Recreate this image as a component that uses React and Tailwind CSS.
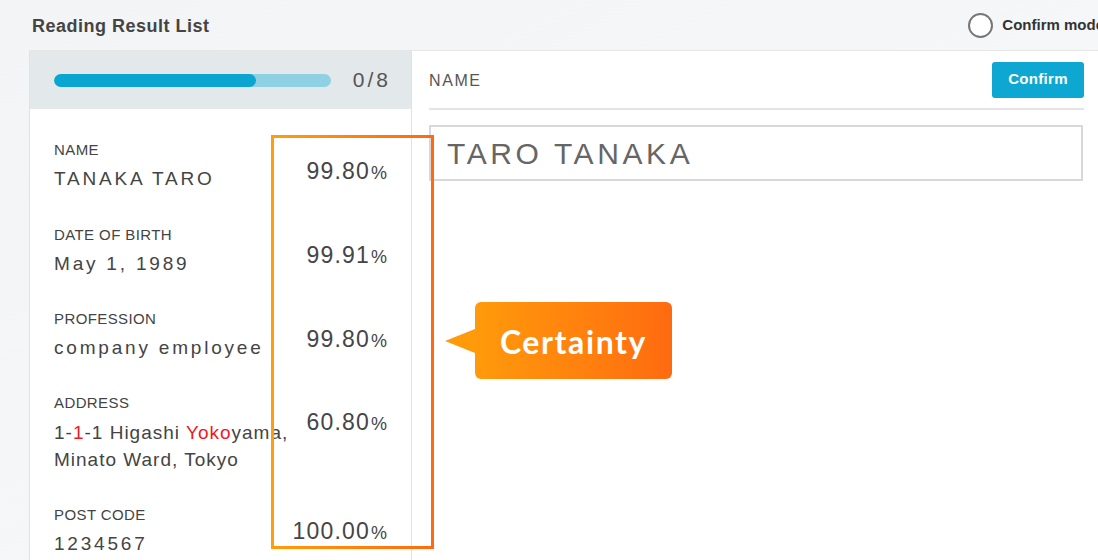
import React from 'react';

// Reading result rows shown in the left list
const FIELDS = [
  { label: 'NAME', value: 'TANAKA TARO', num: '99.80', gap: 'mt-[15px]' },
  { label: 'DATE OF BIRTH', value: 'May 1, 1989', num: '99.91', gap: 'mt-[14px]' },
  { label: 'PROFESSION', value: 'company employee', num: '99.80', gap: 'mt-[14px]' },
  { label: 'ADDRESS', address: true, num: '60.80', gap: 'mt-[13px]' },
  { label: 'POST CODE', value: '1234567', num: '100.00', gap: 'mt-[10px]' },
];

const rowSpacing = ['mt-0', 'mt-[36px]', 'mt-[35px]', 'mt-[35px]', 'mt-[34px]'];

const Percent = ({ num, gap }) => (
  <div className={`${gap} shrink-0 leading-[28px] text-[#454545] whitespace-nowrap`}>
    <span className="text-[23px] tracking-[1.2px]">{num}</span>
    <span className="text-[18px] ml-[1px]">%</span>
  </div>
);

const FieldRow = ({ field, idx }) => (
  <div className={`${rowSpacing[idx]} flex justify-between`}>
    <div className="min-w-0">
      <div className="text-[15px] leading-[16px] text-[#444] tracking-[0.4px]">{field.label}</div>
      {field.address ? (
        <div className="mt-[8px] text-[19px] leading-[27px] text-[#444] tracking-[1px] whitespace-nowrap">
          <div>
            1-<span className="text-[#f0191e]">1</span>-1 Higashi{' '}
            <span className="text-[#f0191e]">Yoko</span>yama,
          </div>
          <div>Minato Ward, Tokyo</div>
        </div>
      ) : (
        <div className="mt-[9px] text-[19px] leading-[24px] text-[#444] tracking-[2.8px] whitespace-nowrap">
          {field.value}
        </div>
      )}
    </div>
    <Percent num={field.num} gap={field.gap} />
  </div>
);

const ProgressHeader = () => (
  <div className="h-[58px] bg-[#e3e8eb] flex items-center pl-[24px] pr-[23px]">
    <div className="w-[277px] h-[13px] rounded-full bg-[#8fd0e2] overflow-hidden">
      <div className="h-full w-[202px] rounded-full bg-[#0ba5d2]" />
    </div>
    <div className="ml-auto text-[21px] tracking-[3px] text-[#555] mr-[-3px]">0/8</div>
  </div>
);

export default function App() {
  return (
    <div
      className="relative w-[1098px] h-[560px] overflow-hidden bg-gradient-to-br from-[#f3f4f6] to-[#f8f9fb]"
      style={{ fontFamily: '"Liberation Sans", Arial, sans-serif' }}
    >
      {/* top bar */}
      <div className="h-[50px] flex items-center pl-[32px]">
        <div className="text-[18px] font-bold text-[#444] tracking-[0.5px] mt-[2px]">Reading Result List</div>
        <div className="ml-auto shrink-0 flex items-center gap-[9px] mr-[-6px]">
          <div className="w-[25px] h-[25px] rounded-full border-2 border-[#777] bg-white" />
          <div className="text-[15px] font-bold text-[#333] whitespace-nowrap">Confirm mode</div>
        </div>
      </div>

      {/* main area */}
      <div className="flex ml-[29px] h-[510px] border-t border-[#e6e6e6] bg-white">
        {/* left list */}
        <div className="w-[383px] shrink-0 border-l border-r border-[#e2e2e2]">
          <ProgressHeader />
          <div className="pt-[33px] pl-[24px] pr-[24px]">
            {FIELDS.map((f, i) => (
              <FieldRow key={f.label} field={f} idx={i} />
            ))}
          </div>
        </div>

        {/* right detail */}
        <div className="flex-1 pl-[17px] pr-[14px]">
          <div className="h-[59px] flex items-center border-b-2 border-[#e4e4e4]">
            <div className="text-[16px] tracking-[1.6px] text-[#555] mt-[2px]">NAME</div>
            <button className="ml-auto w-[92px] h-[36px] rounded-[3px] bg-[#0ea7d2] text-white font-bold text-[15px] tracking-[0.3px]">
              Confirm
            </button>
          </div>
          <div className="mt-[15px] h-[56px] mr-[1px] border-2 border-[#d8d8d8] flex items-center pl-[16px]">
            <span className="text-[30px] tracking-[3.6px] text-[#666]">TARO TANAKA</span>
          </div>
        </div>
      </div>

      {/* certainty highlight */}
      <div className="absolute left-[271px] top-[135px] w-[163px] h-[414px] border-[3px] border-solid [border-image:linear-gradient(90deg,#ff9d0a,#ff6a10)_1]" />

      {/* callout */}
      <div className="absolute left-[445px] top-[302px] flex items-center">
        <svg width="30" height="24" viewBox="0 0 30 24" className="block">
          <polygon points="0,12 30,0 30,24" fill="#ff9a0b" />
        </svg>
        <div className="w-[197px] h-[77px] rounded-[6px] bg-gradient-to-r from-[#ff9a0b] to-[#ff6a10] flex items-center justify-center">
          <span
            className="text-[32px] font-bold text-white tracking-[1.6px] mt-[2px]"
            style={{ fontFamily: 'Lato, "Noto Sans", sans-serif' }}
          >
            Certainty
          </span>
        </div>
      </div>
    </div>
  );
}
